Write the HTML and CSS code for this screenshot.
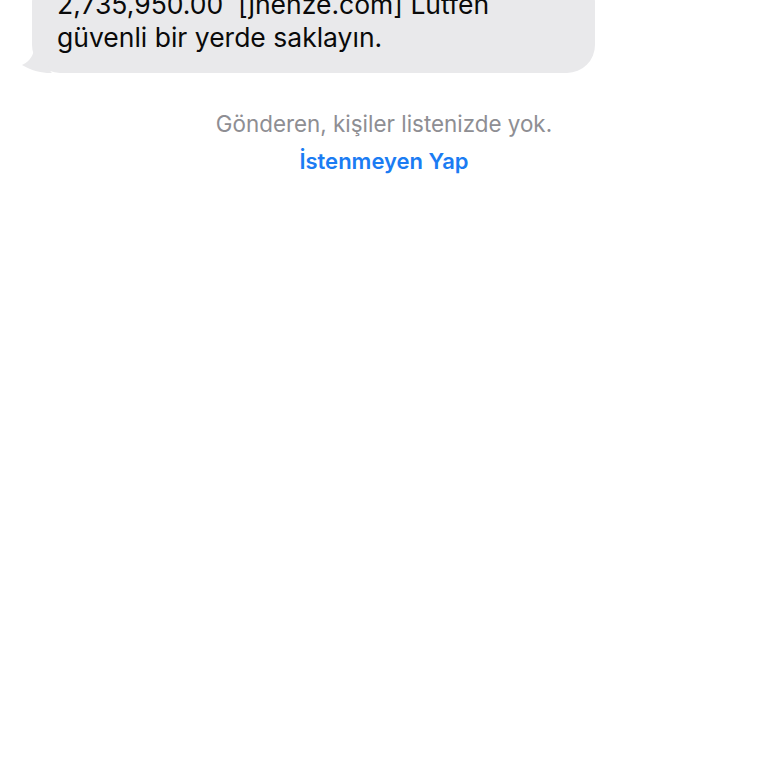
FILE: index.html
```html
<!DOCTYPE html>
<html lang="tr">
<head>
  <meta charset="UTF-8" />
  <meta name="viewport" content="width=device-width, initial-scale=1.0" />
  <title>Mesajlar</title>
  <link rel="stylesheet" href="styles.css">
</head>
<body>
  <div class="thread">
    <div class="bubble">
      <p>2,735,950.00&nbsp; [jhenze.com] Lütfen güvenli bir yerde saklayın.</p>
      <!-- kuyruk -->
      <svg class="tail" width="30" height="26" viewBox="0 0 30 26">
        <path d="M26 0 L26 14 C26 20 28 24 30 26 L28 26 C20 26 10 24 0 18 C8 14 12 8 12 0 Z" fill="#e9e9eb" />
      </svg>
    </div>

    <div class="notice">
      <p class="notice-text">Gönderen, kişiler listenizde yok.</p>
      <a class="notice-link" href="#">İstenmeyen Yap</a>
    </div>
  </div>
</body>
</html>
```

FILE: styles.css
```css
body {
  margin: 0;
  padding: 0;
  background-color: #fff;
  font-family: 'Inter', 'Liberation Sans', sans-serif;
}
.thread {
  margin-top: -25px;
}
.bubble {
  position: relative;
  margin-left: 32px;
  width: 563px;
  box-sizing: border-box;
  background-color: #e9e9eb;
  border-radius: 28px;
  padding: 13px 25px 19px;
}
.bubble p {
  margin: 0;
  font-size: 26.5px;
  line-height: 33px;
  color: #0a0a0a;
  width: 500px;
}
.tail {
  position: absolute;
  left: -10px;
  bottom: 0;
}
.notice {
  text-align: center;
  margin-top: 38px;
}
.notice-text {
  margin: 0;
  font-size: 22.4px;
  line-height: 26px;
  color: #8e8e93;
}
.notice-link {
  display: inline-block;
  margin-top: 11px;
  font-size: 22px;
  line-height: 26px;
  font-weight: 600;
  color: #1b7cf3;
  text-decoration: none;
}
```
